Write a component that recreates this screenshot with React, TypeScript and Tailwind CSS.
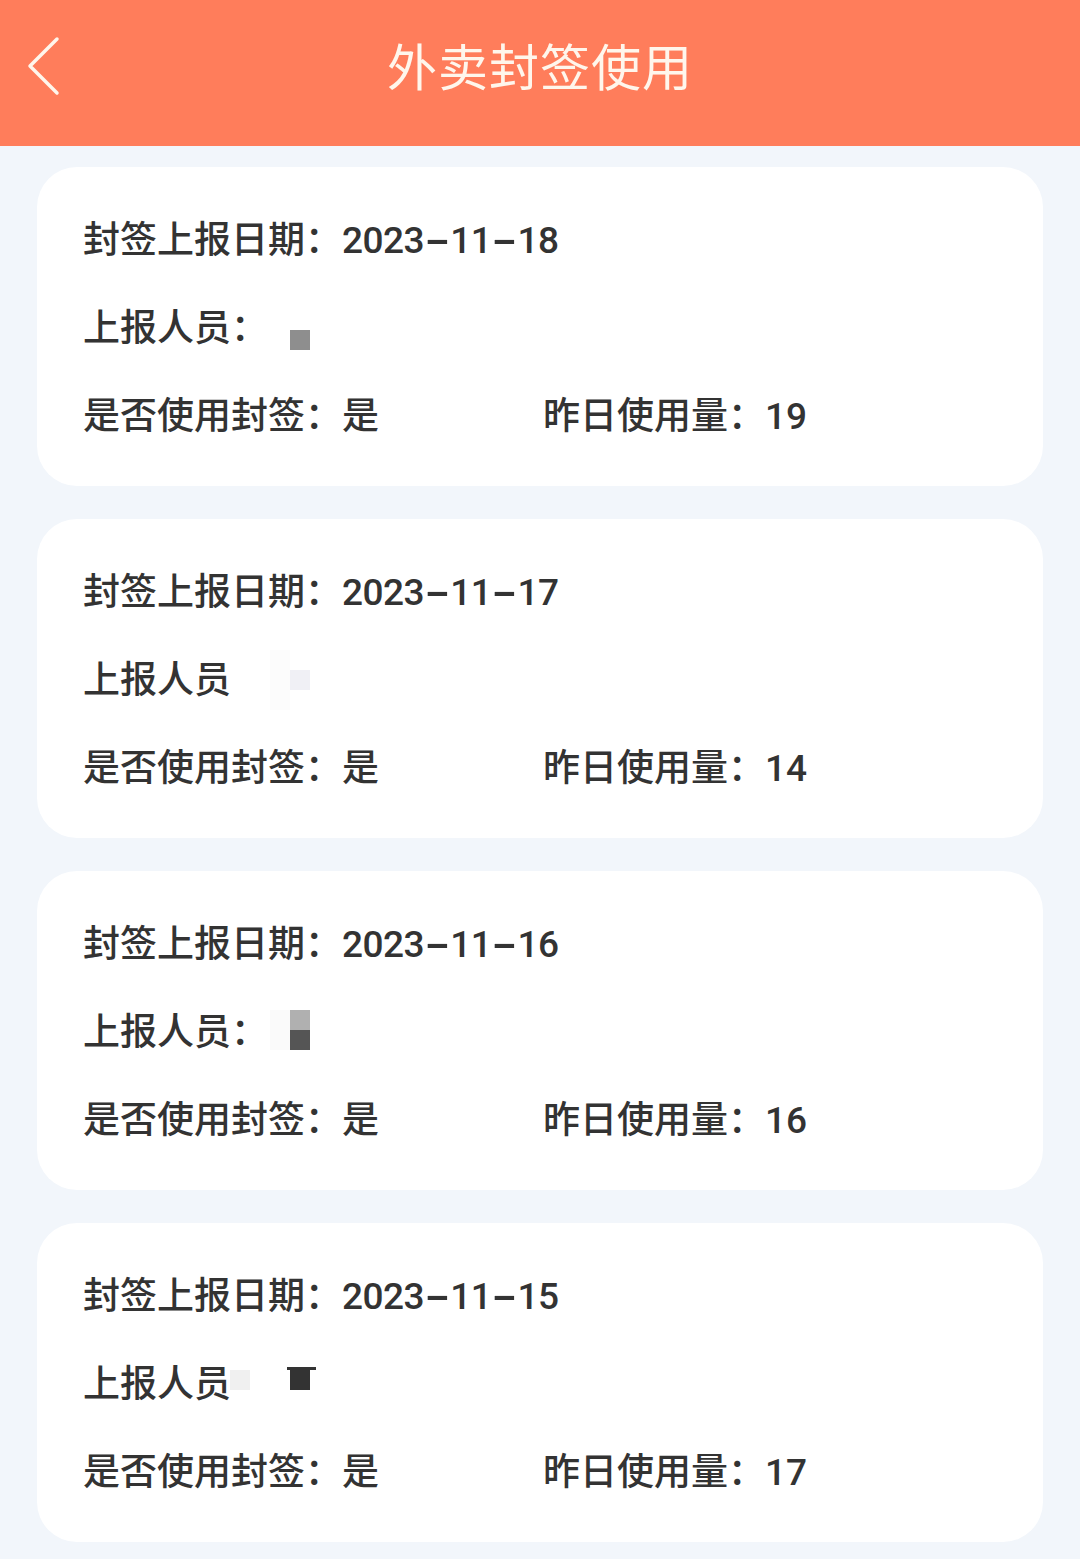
import React from 'react';

type Cell = { x: number; y: number; w: number; h: number; c: string };

type Record = {
  date: string;
  colon: boolean;
  mosaic: Cell[];
  used: string;
  count: number;
};

const records: Record[] = [
  {
    date: '2023-11-18',
    colon: true,
    mosaic: [{ x: 207, y: 46, w: 20, h: 20, c: '#8e8e8e' }],
    used: '是',
    count: 19,
  },
  {
    date: '2023-11-17',
    colon: false,
    mosaic: [
      { x: 187, y: 14, w: 20, h: 60, c: '#fcfcfc' },
      { x: 207, y: 34, w: 20, h: 20, c: '#f0f0f5' },
    ],
    used: '是',
    count: 14,
  },
  {
    date: '2023-11-16',
    colon: true,
    mosaic: [
      { x: 187, y: 22, w: 20, h: 40, c: '#fafafa' },
      { x: 207, y: 22, w: 20, h: 20, c: '#b0b0b0' },
      { x: 207, y: 42, w: 20, h: 20, c: '#555555' },
    ],
    used: '是',
    count: 16,
  },
  {
    date: '2023-11-15',
    colon: false,
    mosaic: [
      { x: 147, y: 30, w: 20, h: 20, c: '#f0f0f0' },
      { x: 204, y: 27, w: 29, h: 3, c: '#333333' },
      { x: 207, y: 30, w: 20, h: 20, c: '#333333' },
    ],
    used: '是',
    count: 17,
  },
];

const DateText: React.FC<{ value: string }> = ({ value }) => {
  const parts = value.split('-');
  return (
    <span className="tracking-[-0.5px]">
      {parts.map((p, i) => (
        <React.Fragment key={i}>
          {i > 0 && <span className="inline-block mx-[6px] scale-x-[1.9] font-bold">-</span>}
          {p}
        </React.Fragment>
      ))}
    </span>
  );
};

const RecordCard: React.FC<{ r: Record }> = ({ r }) => (
  <div className="bg-white rounded-[40px] pl-[46px] pt-[29px] pb-[26px]">
    <div className="h-[88px] flex items-center">
      封签上报日期：<DateText value={r.date} />
    </div>
    <div className="h-[88px] flex items-center relative">
      上报人员{r.colon ? '：' : ''}
      {/* blurred name */}
      {r.mosaic.map((m, i) => (
        <span
          key={i}
          className="absolute block"
          style={{ left: m.x, top: m.y, width: m.w, height: m.h, background: m.c }}
        />
      ))}
    </div>
    <div className="h-[88px] flex items-center">
      <div className="w-[460px]">是否使用封签：{r.used}</div>
      <div>昨日使用量：{r.count}</div>
    </div>
  </div>
);

export default function App() {
  return (
    <div
      className="w-[1080px] min-h-[1559px] bg-[#f2f6fb] text-[#333333] text-[37px] leading-none font-medium"
      style={{ fontFamily: 'Roboto, "Noto Sans CJK SC", "Noto Sans", sans-serif' }}
    >
      <header className="h-[146px] bg-[#ff7d5b] relative flex items-center justify-center pb-[18px]">
        <button className="absolute left-[24px] top-[36px] w-[40px] h-[60px] flex items-center justify-center">
          <svg width="40" height="60" viewBox="0 0 40 60" fill="none">
            <polyline
              points="33,3 6,30 33,57"
              stroke="#fff6ec"
              strokeWidth="3.5"
              strokeLinecap="round"
              strokeLinejoin="round"
            />
          </svg>
        </button>
        <h1
          className="text-[50px] font-normal text-[#fff6ec] tracking-[1px]"
          style={{ fontFamily: '"Noto Sans CJK SC", sans-serif' }}
        >
          外卖封签使用
        </h1>
      </header>
      <main className="px-[37px] pt-[21px] pb-[17px] flex flex-col gap-[33px]">
        {records.map((r) => (
          <RecordCard key={r.date} r={r} />
        ))}
      </main>
    </div>
  );
}
